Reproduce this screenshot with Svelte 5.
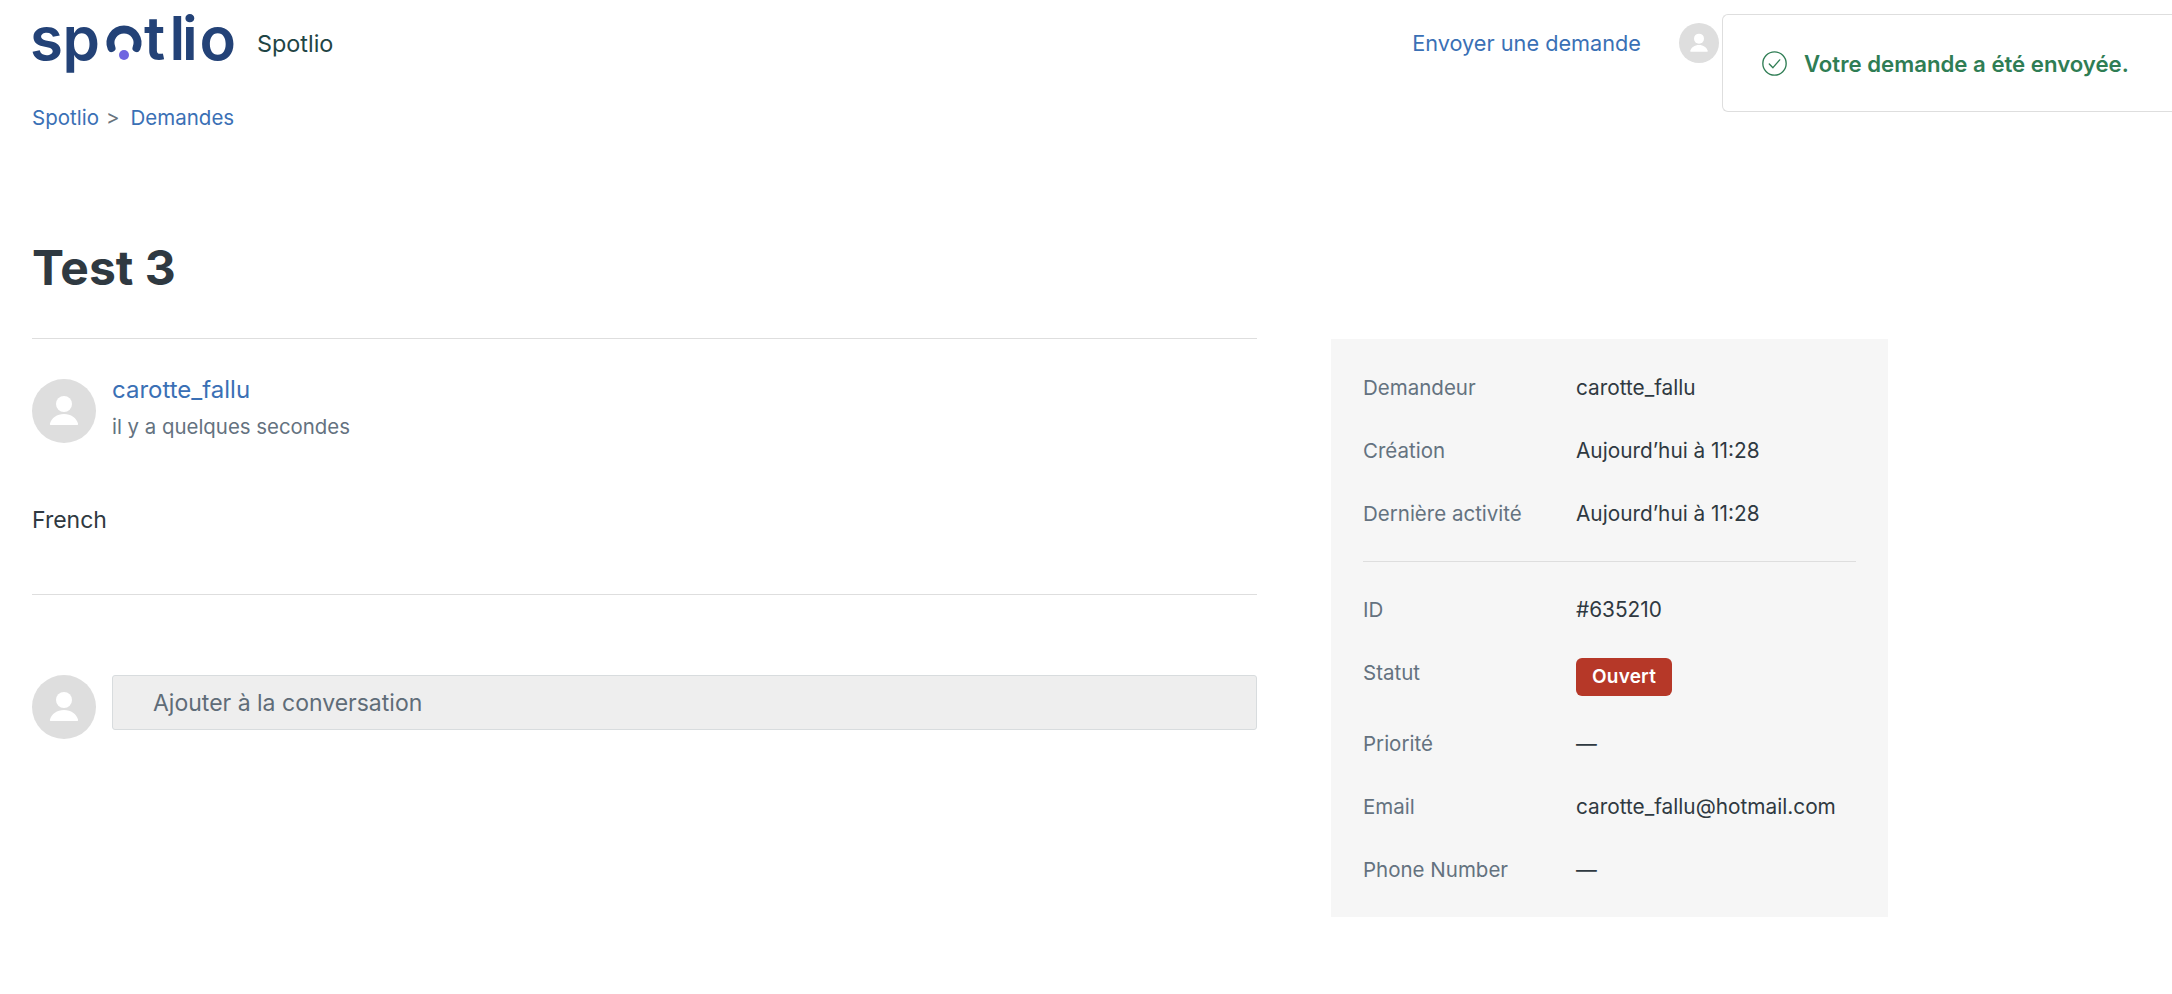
<script lang="ts">
	const topRows = [
		{ label: 'Demandeur', value: 'carotte_fallu' },
		{ label: 'Création', value: 'Aujourd’hui à 11:28' },
		{ label: 'Dernière activité', value: 'Aujourd’hui à 11:28' }
	];
	const bottomBefore = [{ label: 'ID', value: '#635210' }];
	const bottomAfter = [
		{ label: 'Priorité', value: '—' },
		{ label: 'Email', value: 'carotte_fallu@hotmail.com' },
		{ label: 'Phone Number', value: '—' }
	];
</script>

{#snippet person(cls)}
	<svg class={cls} viewBox="0 0 64 64" aria-hidden="true">
		<circle cx="32" cy="32" r="32" fill="#dedede" />
		<circle cx="32" cy="25" r="8" fill="#fff" />
		<path d="M19 46c-1 0-1.300-.6-1-1.500C19.500 39 25 35 32 35s12.500 4 14 9.500c.3.900 0 1.500-1 1.500z" fill="#fff" />
	</svg>
{/snippet}

{#snippet row(label, value)}
	<div class="row">
		<dt>{label}</dt>
		<dd>{value}</dd>
	</div>
{/snippet}

<header class="topbar">
	<a class="brand" href="#top">
		<svg class="logo" viewBox="0 0 214 84" role="img" aria-label="spotlio">
			<g class="logo-type">
				<text x="2 34.500" y="59">sp</text>
				<text x="116 141.500 154 171.500" y="59">tlio</text>
			</g>
			<path d="M83.500 47a13.500 13.500 0 1 1 25 0" fill="none" stroke="#234277" stroke-width="8" stroke-linecap="round" />
			<circle cx="96" cy="54" r="5" fill="#6f66e0" />
		</svg>
		<span class="brand-name">Spotlio</span>
	</a>
	<nav class="user-nav">
		<a href="#top">Envoyer une demande</a>
		{@render person('avatar-sm')}
	</nav>
</header>

<div class="toast" role="status">
	<svg viewBox="0 0 24 24" fill="none" stroke="#2f7d54" stroke-width="1.300" aria-hidden="true">
		<circle cx="12" cy="12" r="11.200" />
		<path d="M7 12.500l3.500 3.500L17 8.500" stroke-linecap="round" stroke-linejoin="round" />
	</svg>
	<span>Votre demande a été envoyée.</span>
</div>

<div class="crumbs">
	<a href="#top">Spotlio</a>
	<span class="sep">&gt;</span>
	<a href="#top">Demandes</a>
</div>

<main class="page">
	<h1>Test 3</h1>
	<div class="columns">
		<section class="thread">
			<article class="comment">
				<div class="author">
					{@render person('avatar')}
					<div class="meta">
						<a href="#top">carotte_fallu</a>
						<span>il y a quelques secondes</span>
					</div>
				</div>
				<p>French</p>
			</article>
			<div class="reply">
				{@render person('avatar')}
				<div class="reply-input">Ajouter à la conversation</div>
			</div>
		</section>

		<aside class="details">
			<dl>
				{#each topRows as r}
					{@render row(r.label, r.value)}
				{/each}
			</dl>
			<hr />
			<dl>
				{#each bottomBefore as r}
					{@render row(r.label, r.value)}
				{/each}
				<div class="row status-row">
					<dt>Statut</dt>
					<dd><span class="badge">Ouvert</span></dd>
				</div>
				{#each bottomAfter as r}
					{@render row(r.label, r.value)}
				{/each}
			</dl>
		</aside>
	</div>
</main>

<style>
	:global(body) {
		margin: 0;
		background: #fff;
		color: #2f3941;
		font-family: Inter, 'Liberation Sans', sans-serif;
		font-size: 21px;
		overflow: hidden;
	}
	a {
		color: #3a70b5;
		text-decoration: none;
	}
	.topbar {
		display: flex;
		align-items: center;
		height: 86px;
		padding: 0 453px 0 32px;
	}
	.brand {
		display: flex;
		align-items: center;
		gap: 15px;
		margin-left: -4px;
	}
	.logo {
		width: 214px;
		height: 84px;
		display: block;
	}
	.logo-type text {
		font-family: Inter, sans-serif;
		font-size: 60px;
		font-weight: 600;
		fill: #234277;
	}
	.brand-name {
		font-size: 23.400px;
		color: #1f4545;
	}
	.user-nav {
		margin-left: auto;
		display: flex;
		align-items: center;
		gap: 38px;
		font-size: 21.700px;
	}
	.avatar-sm {
		width: 40px;
		height: 40px;
		display: block;
	}
	.toast {
		position: fixed;
		top: 14px;
		right: 0;
		left: 1722px;
		height: 96px;
		display: flex;
		align-items: center;
		gap: 17px;
		padding-left: 39px;
		background: #fff;
		border: 1px solid #dedede;
		border-right: 0;
		border-radius: 6px 0 0 6px;
		color: #2f7d54;
		font-size: 22.200px;
		font-weight: 600;
	}
	.toast svg {
		width: 25px;
		height: 25px;
		flex: none;
	}
	.crumbs {
		display: flex;
		gap: 7px;
		padding: 20px 32px 0;
		font-size: 20.500px;
		line-height: 24px;
	}
	.crumbs .sep {
		color: #68737d;
		margin-right: 4px;
	}
	.page {
		padding: 0 32px;
	}
	h1 {
		margin: 0;
		padding: 109px 0 41px;
		font-size: 48px;
		line-height: 58px;
		font-weight: 700;
		color: #2f3941;
	}
	.columns {
		display: grid;
		grid-template-columns: 1225px 557px;
		column-gap: 74px;
		align-items: start;
	}
	.comment {
		border-top: 1px solid #dedede;
		border-bottom: 1px solid #dedede;
		padding: 37px 0 0;
		height: 257px;
		box-sizing: border-box;
	}
	.author {
		display: flex;
		gap: 16px;
		padding-top: 3px;
		height: 64px;
	}
	.avatar {
		width: 64px;
		height: 64px;
		flex: none;
		display: block;
	}
	.meta {
		display: flex;
		flex-direction: column;
		gap: 11px;
		margin-top: -3px;
		font-size: 20.400px;
		color: #64727f;
	}
	.meta a {
		font-size: 24px;
		line-height: 28px;
	}
	.meta span {
		line-height: 24px;
	}
	.comment p {
		margin: 0;
		padding-top: 62px;
		font-size: 23px;
		line-height: 30px;
	}
	.reply {
		display: flex;
		gap: 16px;
		margin-top: 80px;
	}
	.reply-input {
		flex: 1;
		height: 55px;
		box-sizing: border-box;
		padding-left: 40px;
		display: flex;
		align-items: center;
		background: #eee;
		border: 1px solid #d8dcde;
		border-radius: 3px;
		color: #5f6c78;
		font-size: 23px;
	}
	.details {
		background: #f6f6f6;
		padding: 33px 32px 32px;
		margin-top: 1px;
		height: 578px;
		box-sizing: border-box;
	}
	dl {
		margin: 0;
	}
	.row {
		display: grid;
		grid-template-columns: 213px 1fr;
		height: 63px;
		line-height: 32px;
	}
	dt {
		color: #64727f;
		font-size: 20.500px;
	}
	dd {
		margin: 0;
		font-size: 20.800px;
	}
	.status-row {
		height: 71px;
	}
	.badge {
		display: inline-block;
		height: 38px;
		line-height: 38px;
		padding: 0 16px;
		margin-top: 1px;
		border-radius: 6px;
		background: #b63828;
		color: #fff;
		font-size: 19px;
		font-weight: 600;
		letter-spacing: 0.2px;
	}
	hr {
		border: 0;
		border-top: 1px solid #dedede;
		margin: 0 0 32px;
	}
</style>
